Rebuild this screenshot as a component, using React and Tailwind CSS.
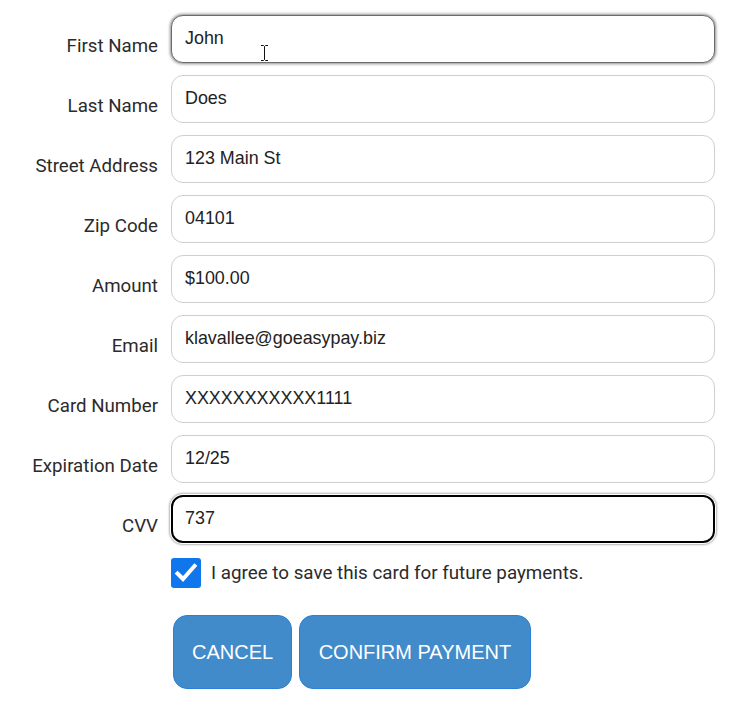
import React, { useState } from "react";

const fields = [
  { label: "First Name", value: "John", state: "hover" },
  { label: "Last Name", value: "Does" },
  { label: "Street Address", value: "123 Main St" },
  { label: "Zip Code", value: "04101" },
  { label: "Amount", value: "$100.00" },
  { label: "Email", value: "klavallee@goeasypay.biz" },
  { label: "Card Number", value: "XXXXXXXXXXX1111" },
  { label: "Expiration Date", value: "12/25" },
  { label: "CVV", value: "737", state: "focus" },
];

function Field({ label, value, state }) {
  const [val, setVal] = useState(value);

  // hover = grey ring with blur, focus = chrome-like black ring
  let ring = "border border-[#cfcfcf]";
  if (state === "hover") ring = "border border-[#6b6b6b] shadow-[0_0_3px_1px_rgba(0,0,0,0.45)]";
  if (state === "focus") ring = "border-2 border-black shadow-[0_0_0_1px_#fff,0_0_2px_2px_#b5b5b5]";

  return (
    <div className="flex items-center gap-[13px]">
      <label className="w-[158px] shrink-0 text-right pt-[14px] text-[18.7px] leading-6 text-[#2b2b2b] font-['Roboto',sans-serif] whitespace-nowrap">
        {label}
      </label>
      <div className="relative w-[544px]">
        <input
          value={val}
          onChange={(e) => setVal(e.target.value)}
          className={`block w-full h-[48px] rounded-[12px] bg-white outline-none text-[17.9px] text-[#222] font-['Liberation_Sans',Arial,sans-serif] ${state === "focus" ? "px-[12px] pb-[2px]" : "px-[13px] pb-[1px]"} ${ring}`}
        />
        {state === "hover" && (
          // mouse I-beam cursor
          <svg className="absolute left-[89px] top-[30px]" width="9" height="16" viewBox="0 0 9 16">
            <path d="M1 0.5h2.5l1 1 1-1H8M4.5 1.5v13M1 15.5h2.5l1-1 1 1H8" fill="none" stroke="#111" strokeWidth="1" />
          </svg>
        )}
      </div>
    </div>
  );
}

export default function App() {
  const [agree, setAgree] = useState(true);

  return (
    <div className="w-[744px] h-[712px] bg-white pt-[15px]">
      <div className="flex flex-col gap-[12px]">
        {fields.map((f) => (
          <Field key={f.label} {...f} />
        ))}
      </div>

      <label className="ml-[171px] mt-[15px] flex items-center gap-[10px] cursor-pointer">
        <span
          onClick={() => setAgree(!agree)}
          className={`w-[30px] h-[30px] rounded-[3px] flex items-center justify-center ${agree ? "bg-[#0f76ec]" : "border-2 border-[#767676] bg-white"}`}
        >
          {agree && (
            <svg width="24" height="24" viewBox="0 0 24 24">
              <path d="M3.5 12.5l5.5 5.5L20.5 5" fill="none" stroke="#fff" strokeWidth="4" strokeLinecap="square" />
            </svg>
          )}
        </span>
        <span className="text-[18.8px] text-[#2b2b2b] font-['Roboto',sans-serif]">
          I agree to save this card for future payments.
        </span>
      </label>

      <div className="ml-[173px] mt-[27px] flex gap-[7px]">
        <button className="h-[74px] px-[18px] rounded-[14px] bg-[#428bca] border border-[#2a80d8] text-white text-[20px] font-['Liberation_Sans',Arial,sans-serif]">
          CANCEL
        </button>
        <button className="h-[74px] px-[18.5px] rounded-[14px] bg-[#428bca] border border-[#2a80d8] text-white text-[20px] font-['Liberation_Sans',Arial,sans-serif]">
          CONFIRM PAYMENT
        </button>
      </div>
    </div>
  );
}
